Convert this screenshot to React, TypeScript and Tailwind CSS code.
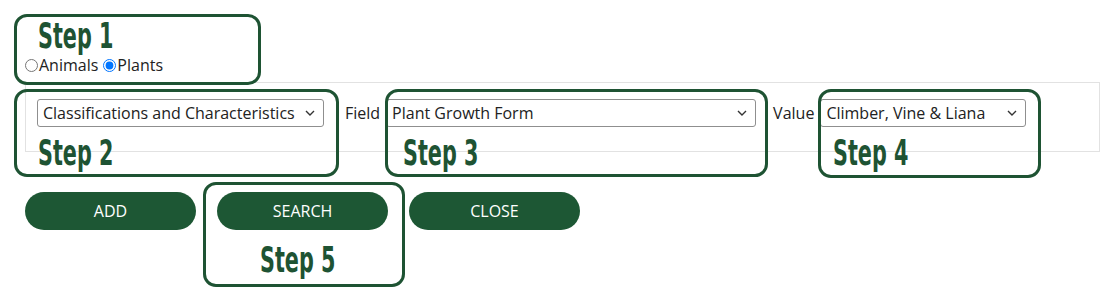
import React from "react";

const green = "#1d5734";

function Chevron() {
  return (
    <svg width="10" height="6" viewBox="0 0 10 6" className="shrink-0">
      <path d="M1 1l4 4 4-4" fill="none" stroke="#333" strokeWidth="1.4" />
    </svg>
  );
}

function FakeSelect({ value, width }: { value: string; width: string }) {
  return (
    <div
      className={`flex h-[28px] items-center justify-between rounded-[3px] border border-[#8f8f8f] bg-white pl-[5px] pr-[8px] text-[16px] text-[#222] ${width}`}
    >
      <span className="truncate">{value}</span>
      <Chevron />
    </div>
  );
}

function StepBox({ label, className, labelClass }: { label: string; className: string; labelClass: string }) {
  return (
    <div className={`pointer-events-none absolute rounded-[13px] border-[3px] border-[#1e5333] ${className}`}>
      <span
        className={`absolute origin-left scale-x-[0.64] text-[36px] font-bold leading-none text-[#1e5333] ${labelClass}`}
        style={{ fontFamily: '"DejaVu Sans Condensed", "DejaVu Sans", sans-serif' }}
      >
        {label}
      </span>
    </div>
  );
}

export default function App() {
  return (
    <div
      className="relative h-[296px] w-[1115px] overflow-hidden bg-white text-[#222]"
      style={{ fontFamily: '"Open Sans", "Noto Sans", sans-serif' }}
    >
      <div className="flex flex-col pl-[25px] pt-[55px]">
        <div className="flex items-center text-[16px] leading-[20px]">
          <input type="radio" name="kind" className="m-0 h-[13px] w-[13px]" />
          <span className="ml-[1px]">Animals</span>
          <input type="radio" name="kind" defaultChecked className="m-0 ml-[5px] h-[13px] w-[13px]" />
          <span className="ml-[1px]">Plants</span>
        </div>

        <div className="mt-[7px] flex h-[70px] w-[1075px] items-start gap-[6px] border border-[#e2e2e2] pl-[11px] pt-[16px] text-[16px]">
          <FakeSelect value="Classifications and Characteristics" width="w-[287px]" />
          <span className="ml-[15px] leading-[28px]">Field</span>
          <FakeSelect value="Plant Growth Form" width="w-[370px]" />
          <span className="ml-[11px] leading-[28px]">Value</span>
          <FakeSelect value="Climber, Vine & Liana" width="w-[206px]" />
        </div>

        <div className="mt-[40px] flex gap-[21px] text-[16px] font-medium text-white">
          {["ADD", "SEARCH", "CLOSE"].map((b) => (
            <button
              key={b}
              className="flex h-[38px] w-[171px] items-center justify-center rounded-full"
              style={{ backgroundColor: green }}
            >
              {b}
            </button>
          ))}
        </div>
      </div>

      <StepBox label="Step 1" className="left-[14px] top-[14px] h-[71px] w-[247px]" labelClass="left-[21px] top-[1px]" />
      <StepBox label="Step 2" className="left-[14px] top-[89px] h-[88px] w-[325px]" labelClass="left-[21px] top-[43px]" />
      <StepBox label="Step 3" className="left-[385px] top-[89px] h-[88px] w-[383px]" labelClass="left-[15px] top-[43px]" />
      <StepBox label="Step 4" className="left-[818px] top-[89px] h-[89px] w-[223px]" labelClass="left-[12px] top-[43px]" />
      <StepBox label="Step 5" className="left-[203px] top-[182px] h-[105px] w-[202px]" labelClass="left-[54px] top-[57px]" />
    </div>
  );
}
